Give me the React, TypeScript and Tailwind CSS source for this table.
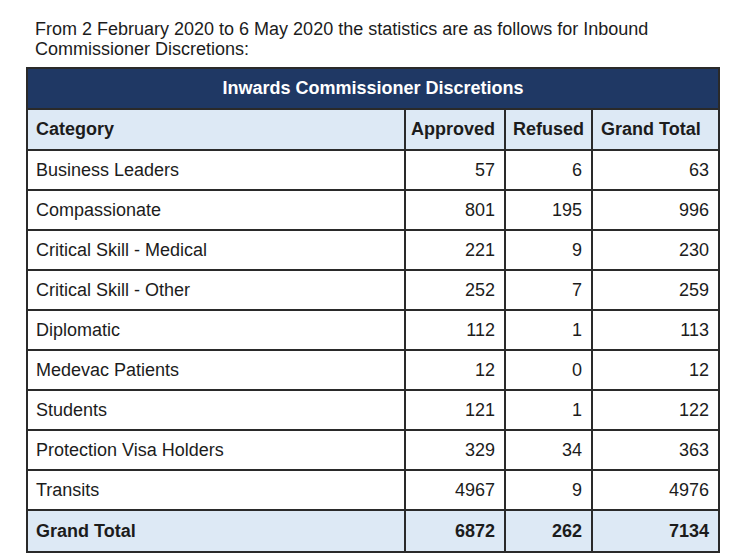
import React from 'react';

type Row = { category: string; approved: number; refused: number; total: number };

const rows: Row[] = [
  { category: 'Business Leaders', approved: 57, refused: 6, total: 63 },
  { category: 'Compassionate', approved: 801, refused: 195, total: 996 },
  { category: 'Critical Skill - Medical', approved: 221, refused: 9, total: 230 },
  { category: 'Critical Skill - Other', approved: 252, refused: 7, total: 259 },
  { category: 'Diplomatic', approved: 112, refused: 1, total: 113 },
  { category: 'Medevac Patients', approved: 12, refused: 0, total: 12 },
  { category: 'Students', approved: 121, refused: 1, total: 122 },
  { category: 'Protection Visa Holders', approved: 329, refused: 34, total: 363 },
  { category: 'Transits', approved: 4967, refused: 9, total: 4976 },
];

const App: React.FC = () => {
  return (
    <div className="w-[748px] h-[556px] bg-white text-[#1c1c1c] font-['Liberation_Sans',Arial,sans-serif] overflow-hidden">
      {/* Intro text */}
      <p className="pl-[35px] pt-[19px] text-[18px] leading-[20px] w-[700px]">
        From 2 February 2020 to 6 May 2020 the statistics are as follows for Inbound Commissioner Discretions:
      </p>

      <table className="ml-[26px] mt-[8px] w-[692px] border-collapse border-2 border-[#2a2a2a] text-[18px] table-fixed">
        <colgroup>
          <col className="w-[378px]" />
          <col className="w-[100px]" />
          <col className="w-[87px]" />
          <col className="w-[127px]" />
        </colgroup>
        <thead>
          <tr className="h-[41px] bg-[#1f3864]">
            <th colSpan={4} className="text-white font-bold text-center border-2 border-[#2a2a2a]">
              Inwards Commissioner Discretions
            </th>
          </tr>
          <tr className="h-[41px] bg-[#dde9f5] font-bold">
            <th className="text-left pl-[8px] border-2 border-[#2a2a2a]">Category</th>
            <th className="text-right pr-[9px] border-2 border-[#2a2a2a]">Approved</th>
            <th className="text-left pl-[7px] border-2 border-[#2a2a2a]">Refused</th>
            <th className="text-left pl-[8px] border-2 border-[#2a2a2a]">Grand Total</th>
          </tr>
        </thead>
        <tbody>
          {rows.map((r) => (
            <tr key={r.category} className="h-[40px]">
              <td className="pl-[8px] border-2 border-[#2a2a2a]">{r.category}</td>
              <td className="text-right pr-[9px] border-2 border-[#2a2a2a]">{r.approved}</td>
              <td className="text-right pr-[9px] border-2 border-[#2a2a2a]">{r.refused}</td>
              <td className="text-right pr-[9px] border-2 border-[#2a2a2a]">{r.total}</td>
            </tr>
          ))}
          <tr className="h-[42px] bg-[#dde9f5] font-bold">
            <td className="pl-[8px] border-2 border-[#2a2a2a]">Grand Total</td>
            <td className="text-right pr-[9px] border-2 border-[#2a2a2a]">6872</td>
            <td className="text-right pr-[9px] border-2 border-[#2a2a2a]">262</td>
            <td className="text-right pr-[9px] border-2 border-[#2a2a2a]">7134</td>
          </tr>
        </tbody>
      </table>
    </div>
  );
};

export default App;
